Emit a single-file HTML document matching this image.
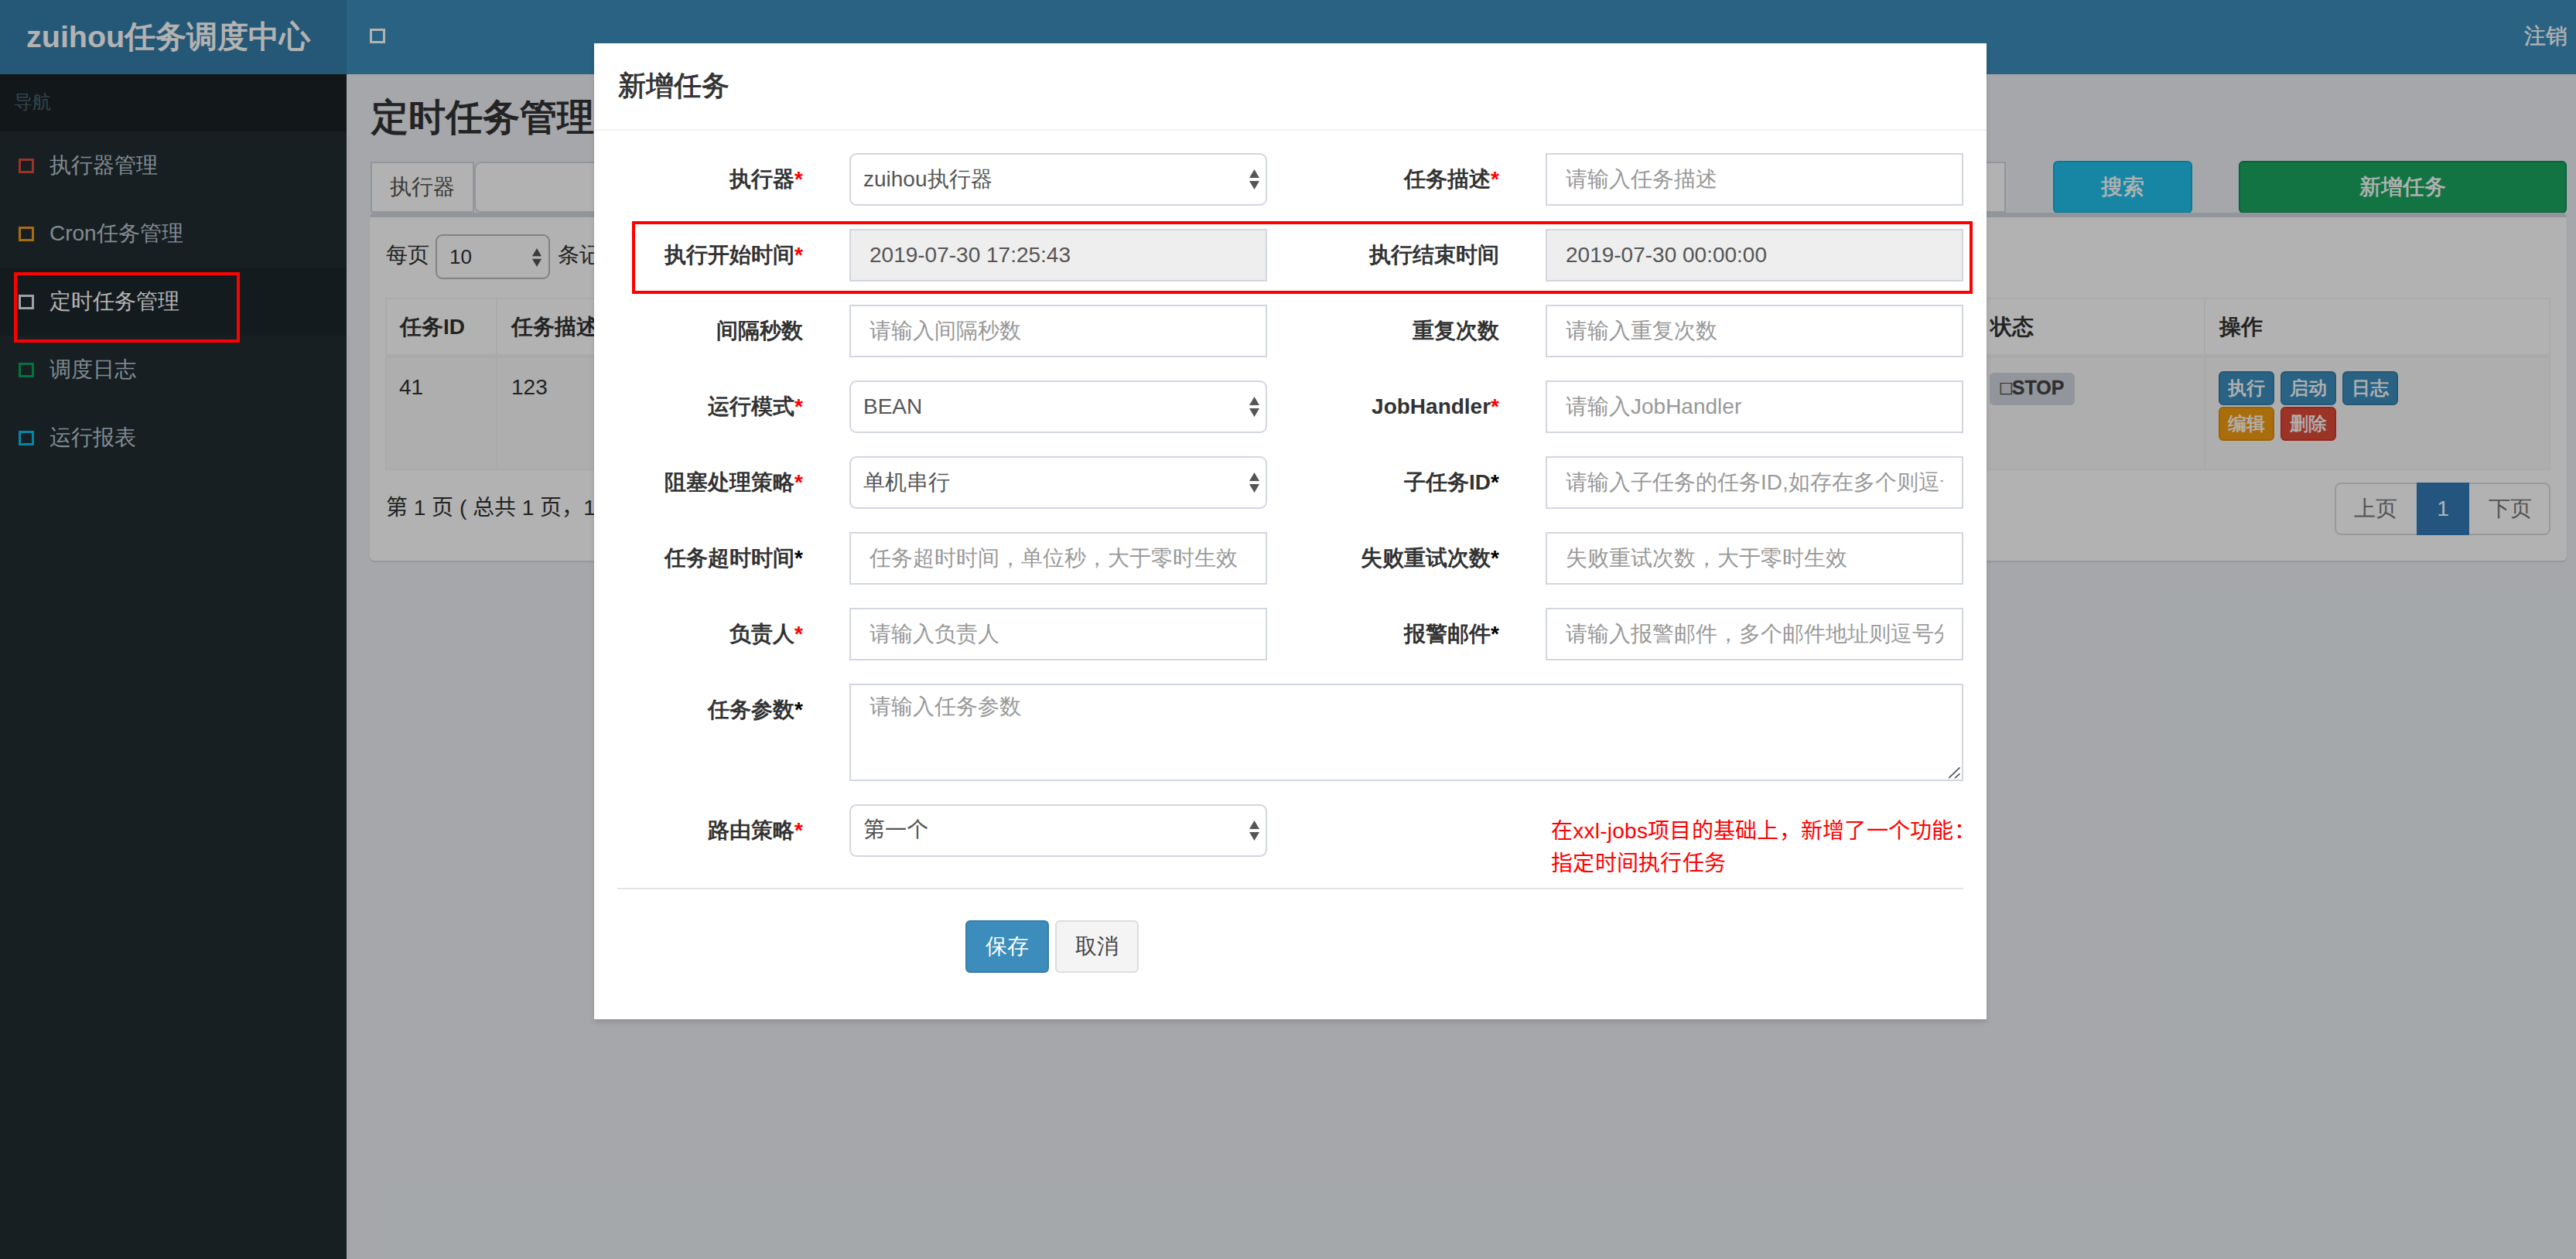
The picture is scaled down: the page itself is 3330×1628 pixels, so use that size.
<!DOCTYPE html>
<html><head><meta charset="utf-8">
<style>
*{box-sizing:border-box;margin:0;padding:0}
html,body{width:3330px;height:1628px;overflow:hidden}
body{position:relative;font-family:"Liberation Sans",sans-serif;font-size:28px;color:#333;background:#ecf0f5}
.a{position:absolute;white-space:nowrap}
.ico{position:absolute;width:20px;height:19px;border:3px solid #fff}
/* header */
#logo{left:0;top:0;width:448px;height:96px;background:#367fa9;color:#fff;font-size:39.5px;font-weight:bold;line-height:95px;padding-left:34px}
#nav{left:448px;top:0;width:2882px;height:96px;background:#3c8dbc}
#side{left:0;top:96px;width:448px;height:1532px;background:#222d32}
#sideh{left:0;top:96px;width:448px;height:74px;background:#1a2226;color:#4b646f;font-size:24px;line-height:71px;padding-left:18px}
.mi{position:absolute;left:0;width:448px;height:88px;color:#b8c7ce;line-height:88px}
.mi span{position:absolute;left:64px;top:0}
.mi .ico{left:24px;top:35px}
/* content */
.box{position:absolute;left:478px;top:275px;width:2840px;height:450px;background:#fff;border-top:6px solid #d2d6de;border-radius:6px;box-shadow:0 2px 2px rgba(0,0,0,.1)}
.xs{width:72px;height:44px;border:2px solid;color:#fff;font-size:24px;line-height:40px;-webkit-text-stroke:.6px #fff}
#backdrop{left:0;top:0;width:3330px;height:1628px;background:rgba(0,0,0,.3)}
/* modal */
#modal{left:768px;top:56px;width:1800px;height:1262px;background:#fff;box-shadow:0 4px 6px rgba(0,0,0,.125)}
.lbl{position:absolute;font-weight:bold;color:#333;text-align:right;width:300px;line-height:68px}
.req{color:#f00}
.inp{position:absolute;width:540px;height:68px;border:2px solid #d2d6de;background:#fff;color:#555;line-height:64px;padding-left:24px;overflow:hidden;white-space:nowrap}
.ph{color:#999}
.clip{display:block;width:488px;overflow:hidden}
.sel{border-radius:9px;padding-left:16px}
.dis{background:#eee}
.arr{position:absolute;right:8px;top:19px;width:13px;height:26px}
.redbox{position:absolute;border:4px solid #f00}
.btn{position:absolute;border-radius:6px;text-align:center}
.ta{width:1440px;height:126px;line-height:28px;padding-top:14px}
.grip{position:absolute;right:0;bottom:0;width:18px;height:18px}
.note{position:absolute;left:1237px;top:998px;letter-spacing:.25px;color:#f00;line-height:42px;white-space:nowrap}
</style></head><body>
<!-- header -->
<div class="a" id="logo">zuihou任务调度中心</div>
<div class="a" id="nav"></div>
<div class="ico" style="left:478px;top:37px;border-color:#fff"></div>
<div class="a" style="left:3263px;top:0;line-height:93px;color:#fff;-webkit-text-stroke:.4px #fff">注销</div>
<!-- sidebar -->
<div class="a" id="side"></div>
<div class="a" id="sideh">导航</div>
<div class="mi" style="top:170px"><i class="ico" style="border-color:#dd4b39"></i><span>执行器管理</span></div>
<div class="mi" style="top:258px"><i class="ico" style="border-color:#f39c12"></i><span>Cron任务管理</span></div>
<div class="mi" style="top:346px;background:#1e282c;color:#fff"><i class="ico" style="border-color:#e4e6ee"></i><span>定时任务管理</span></div>
<div class="mi" style="top:434px"><i class="ico" style="border-color:#00a65a"></i><span>调度日志</span></div>
<div class="mi" style="top:522px"><i class="ico" style="border-color:#00c0ef"></i><span>运行报表</span></div>
<!-- content -->
<div class="a" style="left:480px;top:116px;font-size:48px;font-weight:bold;line-height:72px;color:#333">定时任务管理</div>
<!-- filter row -->
<div class="a" style="left:479px;top:209px;width:134px;height:66px;background:#fff;border:2px solid #d2d6de;color:#555;line-height:62px;text-align:center">执行器</div>
<div class="a" style="left:613px;top:209px;width:530px;height:66px;background:#fff;border:2px solid #d2d6de;border-radius:9px"></div>
<div class="a" style="left:1928px;top:209px;width:665px;height:66px;background:#fff;border:2px solid #d2d6de"></div>
<div class="btn" style="left:2654px;top:208px;width:180px;height:68px;background:#22c1ed;border:2px solid #10aed6;color:#fff;line-height:64px;-webkit-text-stroke:.6px #fff">搜索</div>
<div class="btn" style="left:2894px;top:208px;width:424px;height:68px;background:#1aa661;border:2px solid #0a8d4f;color:#fff;line-height:64px;-webkit-text-stroke:.6px #fff">新增任务</div>
<div class="box"></div>
<div class="a" style="left:499px;top:296px;line-height:68px;color:#333">每页</div>
<div class="a" style="left:563px;top:303px;width:148px;height:58px;background:#fff;border:2px solid #bbb;border-radius:9px;color:#333;line-height:54px;padding-left:16px;font-size:26px">10<svg style="position:absolute;right:9px;top:16px;width:12px;height:24px" viewBox="0 0 13 26"><path d="M0 11L6.5 0L13 11Z M0 15L13 15L6.5 26Z" fill="#555"/></svg></div>
<div class="a" style="left:721px;top:296px;line-height:68px;color:#333">条记录</div>
<!-- table -->
<div class="a" style="left:498px;top:385px;width:2799px;height:223px;border:2px solid #f4f4f4"></div>
<div class="a" style="left:500px;top:463px;width:2795px;height:143px;background:#f9f9f9"></div>
<div class="a" style="left:500px;top:458px;width:2795px;height:5px;background:#f4f4f4"></div>
<div class="a" style="left:641px;top:387px;width:2px;height:219px;background:#f4f4f4"></div>
<div class="a" style="left:2849px;top:387px;width:2px;height:219px;background:#f4f4f4"></div>
<div class="a" style="left:517px;top:387px;line-height:72px;font-weight:bold">任务ID</div>
<div class="a" style="left:661px;top:387px;line-height:72px;font-weight:bold">任务描述</div>
<div class="a" style="left:2573px;top:387px;line-height:72px;font-weight:bold">状态</div>
<div class="a" style="left:2869px;top:387px;line-height:72px;font-weight:bold">操作</div>
<div class="a" style="left:516px;top:465px;line-height:72px">41</div>
<div class="a" style="left:661px;top:465px;line-height:72px">123</div>
<div class="a" style="left:2572px;top:482px;width:110px;height:42px;background:#d2d6de;border-radius:6px;color:#444;font-weight:bold;font-size:25px;line-height:38px;text-align:center;-webkit-text-stroke:.3px #444">&#9633;STOP</div>
<div class="btn xs" style="left:2868px;top:480px;background:#3c8dbc;border-color:#367fa9">执行</div>
<div class="btn xs" style="left:2948px;top:480px;background:#3c8dbc;border-color:#367fa9">启动</div>
<div class="btn xs" style="left:3028px;top:480px;background:#3c8dbc;border-color:#367fa9">日志</div>
<div class="btn xs" style="left:2868px;top:526px;background:#f39c12;border-color:#e08e0b">编辑</div>
<div class="btn xs" style="left:2948px;top:526px;background:#dd4b39;border-color:#d73925">删除</div>
<div class="a" style="left:499px;top:623px;line-height:68px" lang="zh-CN">第 1 页 ( 总共 1 页，1 条记录 )</div>
<!-- pagination -->
<div class="a" style="left:3018px;top:624px;width:279px;height:68px;border:2px solid #ddd;border-radius:8px;background:#fff"></div>
<div class="a" style="left:3124px;top:624px;width:68px;height:68px;background:#337ab7"></div>
<div class="a" style="left:3018px;top:624px;width:106px;line-height:68px;text-align:center;color:#777">上页</div>
<div class="a" style="left:3124px;top:624px;width:68px;line-height:68px;text-align:center;color:#fff">1</div>
<div class="a" style="left:3192px;top:624px;width:105px;line-height:68px;text-align:center;color:#777">下页</div>
<!-- backdrop -->
<div class="a" id="backdrop"></div>
<!-- annotation on sidebar -->
<div class="redbox" style="left:18px;top:352px;width:292px;height:91px"></div>
<!-- modal -->
<div class="a" id="modal">
<div class="a" style="left:31px;top:24px;font-size:36px;-webkit-text-stroke:.9px #333;line-height:62px;color:#333">新增任务</div>
<div class="a" style="left:0;top:111px;width:1800px;height:2px;background:#f0f0f0"></div>
<div class="lbl" style="left:-30px;top:142px">执行器<span class="req">*</span></div>
<div class="inp sel" style="left:330px;top:142px">zuihou执行器<svg class="arr" viewBox="0 0 13 26"><path d="M0 11L6.5 0L13 11Z M0 15L13 15L6.5 26Z" fill="#555"/></svg></div>
<div class="lbl" style="left:870px;top:142px">任务描述<span class="req">*</span></div>
<div class="inp ph" style="left:1230px;top:142px"><span class="clip">请输入任务描述</span></div>
<div class="lbl" style="left:-30px;top:240px">执行开始时间<span class="req">*</span></div>
<div class="inp dis" style="left:330px;top:240px">2019-07-30 17:25:43</div>
<div class="lbl" style="left:870px;top:240px">执行结束时间</div>
<div class="inp dis" style="left:1230px;top:240px">2019-07-30 00:00:00</div>
<div class="lbl" style="left:-30px;top:338px">间隔秒数</div>
<div class="inp ph" style="left:330px;top:338px"><span class="clip">请输入间隔秒数</span></div>
<div class="lbl" style="left:870px;top:338px">重复次数</div>
<div class="inp ph" style="left:1230px;top:338px"><span class="clip">请输入重复次数</span></div>
<div class="lbl" style="left:-30px;top:436px">运行模式<span class="req">*</span></div>
<div class="inp sel" style="left:330px;top:436px">BEAN<svg class="arr" viewBox="0 0 13 26"><path d="M0 11L6.5 0L13 11Z M0 15L13 15L6.5 26Z" fill="#555"/></svg></div>
<div class="lbl" style="left:870px;top:436px">JobHandler<span class="req">*</span></div>
<div class="inp ph" style="left:1230px;top:436px"><span class="clip">请输入JobHandler</span></div>
<div class="lbl" style="left:-30px;top:534px">阻塞处理策略<span class="req">*</span></div>
<div class="inp sel" style="left:330px;top:534px">单机串行<svg class="arr" viewBox="0 0 13 26"><path d="M0 11L6.5 0L13 11Z M0 15L13 15L6.5 26Z" fill="#555"/></svg></div>
<div class="lbl" style="left:870px;top:534px">子任务ID<span style="color:#000">*</span></div>
<div class="inp ph" style="left:1230px;top:534px"><span class="clip">请输入子任务的任务ID,如存在多个则逗号分隔</span></div>
<div class="lbl" style="left:-30px;top:632px">任务超时时间<span style="color:#000">*</span></div>
<div lang="zh-CN" class="inp ph" style="left:330px;top:632px"><span class="clip">任务超时时间，单位秒，大于零时生效</span></div>
<div class="lbl" style="left:870px;top:632px">失败重试次数<span style="color:#000">*</span></div>
<div lang="zh-CN" class="inp ph" style="left:1230px;top:632px"><span class="clip">失败重试次数，大于零时生效</span></div>
<div class="lbl" style="left:-30px;top:730px">负责人<span class="req">*</span></div>
<div class="inp ph" style="left:330px;top:730px"><span class="clip">请输入负责人</span></div>
<div class="lbl" style="left:870px;top:730px">报警邮件<span style="color:#000">*</span></div>
<div lang="zh-CN" class="inp ph" style="left:1230px;top:730px"><span class="clip">请输入报警邮件，多个邮件地址则逗号分隔</span></div>
<div class="lbl" style="left:-30px;top:828px">任务参数<span style="color:#000">*</span></div>
<div class="inp ph ta" style="left:330px;top:828px">请输入任务参数<svg class="grip" viewBox="0 0 18 18"><path d="M1.7 15.7L15 2.9M9.6 15.7L15 10.8" stroke="#555" stroke-width="1.7" stroke-linecap="round"/></svg></div>
<div class="lbl" style="left:-30px;top:984px">路由策略<span class="req">*</span></div>
<div class="inp sel" style="left:330px;top:984px">第一个<svg class="arr" viewBox="0 0 13 26"><path d="M0 11L6.5 0L13 11Z M0 15L13 15L6.5 26Z" fill="#555"/></svg></div>
<div class="note" lang="zh-CN">在xxl-jobs项目的基础上，新增了一个功能：<br>指定时间执行任务</div>
<div class="a" style="left:30px;top:1092px;width:1740px;height:2px;background:#e5e5e5"></div>
<div class="btn" style="left:480px;top:1134px;width:108px;height:68px;background:#3c8dbc;border:2px solid #367fa9;color:#fff;line-height:64px">保存</div>
<div class="btn" style="left:596px;top:1134px;width:108px;height:68px;background:#f4f4f4;border:2px solid #ddd;color:#444;line-height:64px">取消</div>
</div>
<div class="redbox" style="left:817px;top:286px;width:1733px;height:94px"></div>
</body></html>
